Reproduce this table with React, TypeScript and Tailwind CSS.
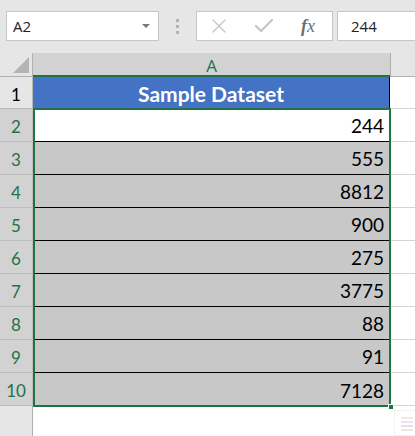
import { X, Check } from "lucide-react";

const rows = [
  { n: 2, v: "244", active: true },
  { n: 3, v: "555" },
  { n: 4, v: "8812" },
  { n: 5, v: "900" },
  { n: 6, v: "275" },
  { n: 7, v: "3775" },
  { n: 8, v: "88" },
  { n: 9, v: "91" },
  { n: 10, v: "7128" },
];

const App = () => {
  return (
    <div className="w-[415px] h-[436px] bg-white overflow-hidden font-['Lato',sans-serif] text-black">
      {/* Formula bar */}
      <div className="h-[53px] bg-[#e6e6e6] flex items-start pt-[11px]">
        <div className="ml-[6px] w-[153px] h-[30px] bg-white border border-[#c6c6c6] flex items-center justify-between pl-[6px] pr-[8px]">
          <span className="font-['Open_Sans',sans-serif] text-[15px] text-[#222]">A2</span>
          <svg width="8" height="5" viewBox="0 0 8 5">
            <path d="M0 0 L8 0 L4 4 Z" fill="#7a7a7a" />
          </svg>
        </div>
        <div className="w-[37px] h-[30px] flex flex-col items-center justify-center gap-[3px]">
          <span className="w-[3px] h-[3px] bg-[#b3b3b3]" />
          <span className="w-[3px] h-[3px] bg-[#b3b3b3]" />
          <span className="w-[3px] h-[3px] bg-[#b3b3b3]" />
        </div>
        <div className="w-[137px] h-[30px] bg-white border border-[#c6c6c6] flex items-center">
          <X className="ml-[10px] w-[24px] h-[24px] text-[#c4c4c4]" strokeWidth={1.3} />
          <Check className="ml-[21px] w-[24px] h-[24px] text-[#c4c4c4]" strokeWidth={2.2} />
          <span className="ml-[25px] font-['Liberation_Serif',serif] italic text-[18px] text-[#6e6e6e] leading-none">
            <span className="font-bold">f</span>x
          </span>
        </div>
        <div className="ml-[4px] flex-1 h-[30px] bg-white border-y border-l border-[#c6c6c6] flex items-center pl-[13px]">
          <span className="font-['Open_Sans',sans-serif] text-[15px] text-[#222]">244</span>
        </div>
      </div>

      {/* Column header row */}
      <div className="flex h-[24px]">
        <div className="w-[33px] bg-[#e6e6e6] border-b border-r border-[#b0b0b0] flex items-end justify-end pr-[3px] pb-[3px]">
          <svg width="16" height="16" viewBox="0 0 16 16">
            <path d="M16 0 L16 16 L0 16 Z" fill="#b4b4b4" />
          </svg>
        </div>
        <div className="w-[357px] bg-[#d2d2d2] border-b-2 border-[#217346] flex items-center justify-center text-[17px] text-[#217346] font-['Open_Sans',sans-serif] leading-none pt-[2px]">
          A
        </div>
        <div className="flex-1 bg-[#e6e6e6] border-b border-l border-[#b0b0b0]" />
      </div>

      {/* Sheet body */}
      <div className="relative">
        <div className="flex h-[32px]">
          <div className="w-[33px] bg-[#e6e6e6] border-r border-b border-[#b8b8b8] flex items-center justify-center text-[17px] pt-[4px]">
            1
          </div>
          <div className="w-[357px] bg-[#4472c4] border-r border-black flex items-center justify-center text-white font-bold text-[21px] pt-[2px]">
            Sample Dataset
          </div>
          <div className="flex-1 border-b border-[#d4d4d4]" />
        </div>

        {rows.map((r) => (
          <div key={r.n} className="flex h-[33px]">
            <div className="w-[33px] bg-[#d2d2d2] border-r border-b border-[#bdbdbd] flex items-center justify-center text-[17px] text-[#217346] pt-[4px]">
              {r.n}
            </div>
            <div
              className={`w-[357px] ${r.active ? "bg-white" : "bg-[#c8c8c8]"} ${
                r.n === 10 ? "" : "border-b border-black"
              } flex items-center justify-end pr-[6px] pt-[3px] text-[19px]`}
            >
              {r.v}
            </div>
            <div className="flex-1 border-b border-[#d4d4d4]" />
          </div>
        ))}

        <div className="flex h-[40px]">
          <div className="w-[33px] bg-[#e6e6e6] border-r border-[#b0b0b0]" />
          <div className="flex-1" />
        </div>

        {/* Selection A2:A10 */}
        <div className="absolute left-[33px] top-[31px] w-[358px] h-[299px] border-2 border-[#217346]" />
        <div className="absolute left-[388px] top-[327px] w-[6px] h-[6px] bg-[#217346] border border-white" />
        {/* Quick analysis button (faded) */}
        <div className="absolute left-[394px] top-[333px] w-[24px] h-[26px] border border-[#ececec] bg-white flex flex-col gap-[2px] pl-[6px] pt-[6px] opacity-60">
          <span className="w-[12px] h-[2px] bg-[#f4d7c4]" />
          <span className="w-[12px] h-[2px] bg-[#c9d9ee]" />
          <span className="w-[12px] h-[2px] bg-[#e8c2c2]" />
          <span className="w-[12px] h-[2px] bg-[#d9d9d9]" />
        </div>
      </div>
    </div>
  );
};

export default App;
